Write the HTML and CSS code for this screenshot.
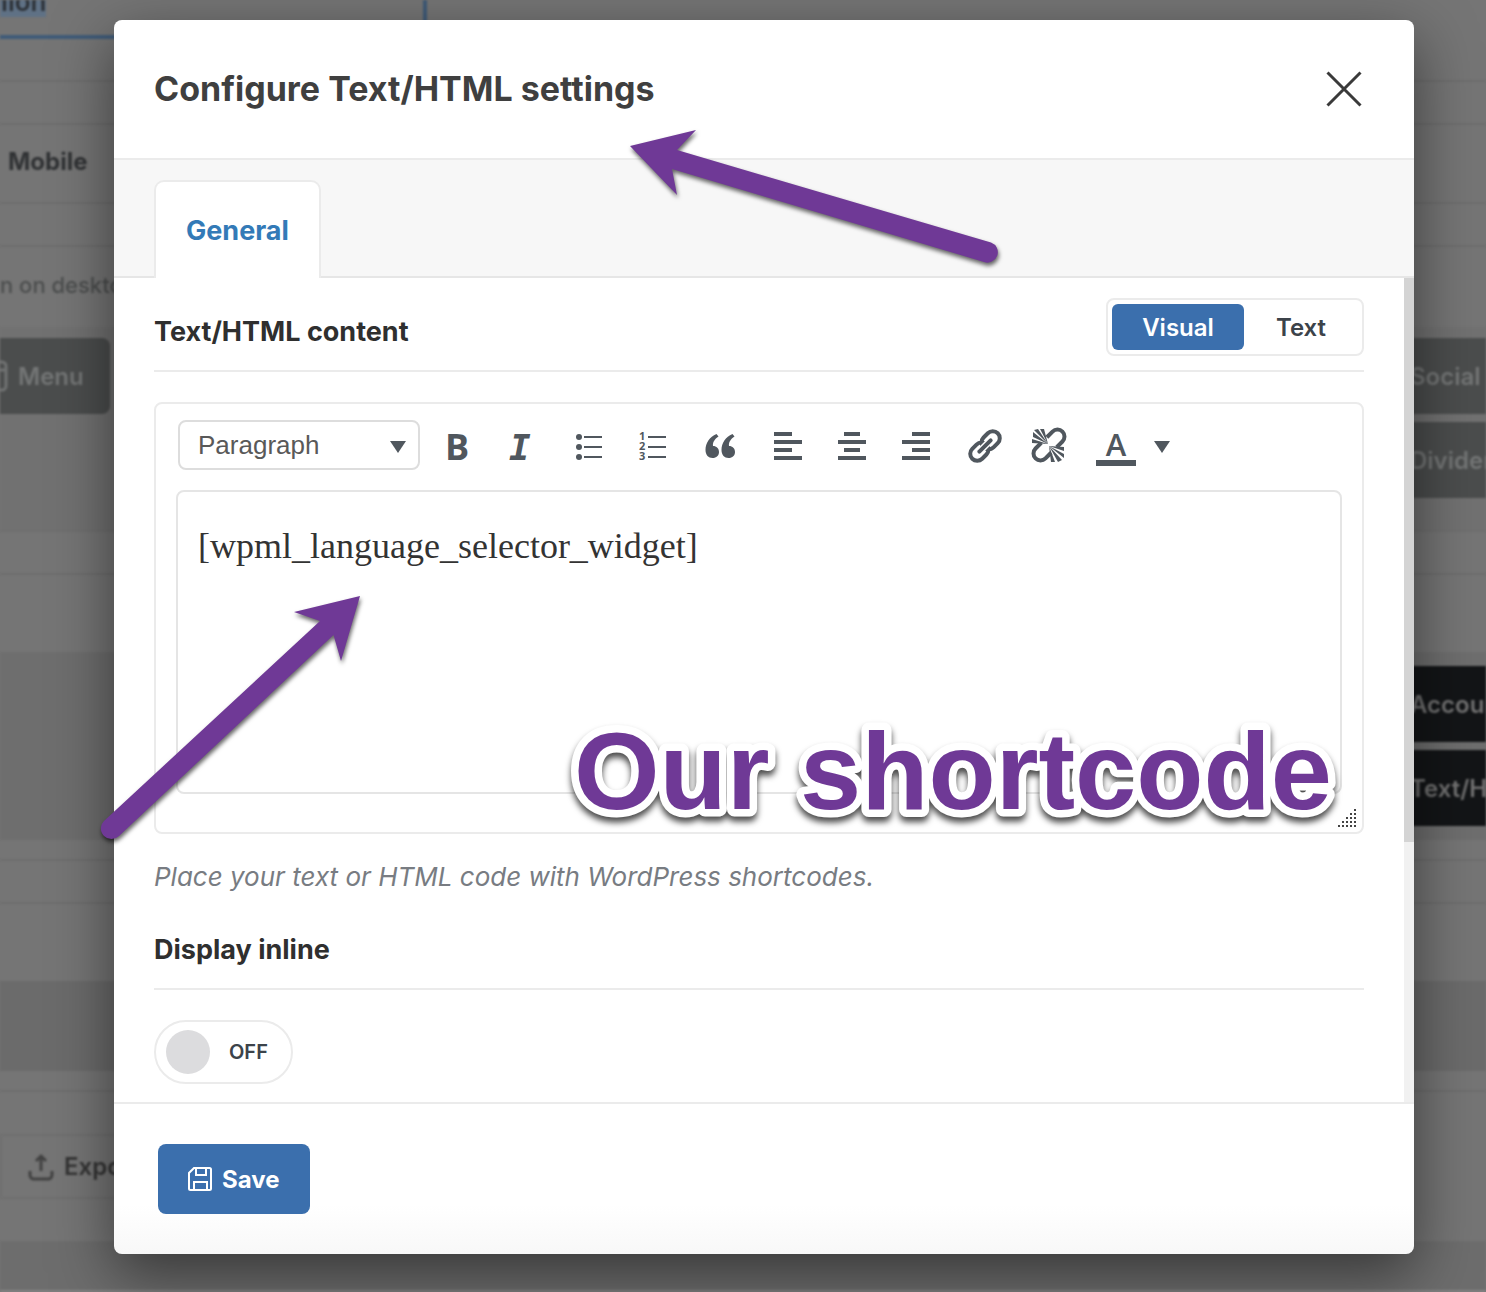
FILE: index.html
```html
<!DOCTYPE html>
<html lang="en">
  <head>
    <meta charset="UTF-8" />
    <meta name="viewport" content="width=device-width, initial-scale=1.0" />
    <title>Header builder</title>
    <link rel="stylesheet" href="styles.css">
  </head>
  <body>
    <!-- Builder page under the popup -->
    <div class="builder" aria-hidden="true">
      <div class="row row-title"><div class="title-box"><span>nion</span></div></div>
      <div class="row row-small"></div>
      <div class="row row-tabs"><span class="device">Mobile</span></div>
      <div class="row row-small"></div>
      <div class="row row-note"><span>n on desktop</span></div>
      <div class="row row-elements">
        <div class="element element-left">
          <svg width="10" height="34" viewBox="0 0 10 34"><path d="M-8 3H2a4 4 0 0 1 4 4v20a4 4 0 0 1-4 4H-8M-8 11H6" fill="none" stroke="#707272" stroke-width="3"/></svg>
          Menu
        </div>
        <div class="elements-right">
          <div class="element">Social</div>
          <div class="element">Divider</div>
        </div>
      </div>
      <div class="row row-small"></div>
      <div class="row row-space"></div>
      <div class="row row-main">
        <div class="elements-right">
          <div class="element element-dark">Account</div>
          <div class="element element-dark">Text/HTML</div>
        </div>
      </div>
      <div class="row row-thin"></div>
      <div class="row row-small"></div>
      <div class="row row-space"></div>
      <div class="row row-band"></div>
      <div class="row row-thin"></div>
      <div class="row row-export">
        <div class="export">
          <svg width="26" height="28" viewBox="0 0 26 28"><path d="M2 18v4a4 4 0 0 0 4 4h14a4 4 0 0 0 4-4v-4M13 18V3M8 8l5-5 5 5" fill="none" stroke="#424242" stroke-width="3"/></svg>
          Export
        </div>
      </div>
      <div class="row row-footer"></div>
    </div>

    <div class="overlay">
      <div class="popup" role="dialog" aria-labelledby="popupTitle">
        <div class="popup-header">
          <h2 id="popupTitle">Configure Text/HTML settings</h2>
          <button type="button" class="close" aria-label="Close">
            <svg width="36" height="36" viewBox="0 0 36 36"><path d="M1.500 1.500l33 33M34.500 1.500l-33 33" stroke="#3a3a3a" stroke-width="3"/></svg>
          </button>
        </div>

        <div class="tabs">
          <button type="button" class="tab">General</button>
        </div>

        <div class="popup-body">
          <div class="fields">
            <div class="field-title">
              <h3><label for="content">Text/HTML content</label></h3>
              <div class="switch-mode">
                <button type="button" class="mode active">Visual</button>
                <button type="button" class="mode">Text</button>
              </div>
            </div>

            <div class="editor">
              <div class="toolbar">
                <div class="format">
                  <select aria-label="Format">
                    <option>Paragraph</option>
                    <option>Heading 1</option>
                    <option>Heading 2</option>
                  </select>
                  <svg class="format-arrow" width="16" height="12" viewBox="0 0 16 12"><path d="M0 0h16L8 12z"/></svg>
                </div>
                <button type="button" class="tool" aria-label="Bold"><span class="tool-bold">B</span></button>
                <button type="button" class="tool" aria-label="Italic"><svg viewBox="0 0 40 40"><text class="italic" x="6" y="35">I</text></svg></button>
                <button type="button" class="tool" aria-label="Bulleted list">
                  <svg viewBox="0 0 40 40"><circle cx="10" cy="12" r="3"/><circle cx="10" cy="22" r="3"/><circle cx="10" cy="32" r="3"/><path d="M15 11h18v2H15zM15 21h18v2H15zM15 31h18v2H15z"/></svg>
                </button>
                <button type="button" class="tool" aria-label="Numbered list">
                  <svg viewBox="0 0 40 40"><text class="num" x="4" y="15">1</text><text class="num" x="4" y="25">2</text><text class="num" x="4" y="35">3</text><path d="M13 11h18v2H13zM13 21h18v2H13zM13 31h18v2H13z"/></svg>
                </button>
                <button type="button" class="tool" aria-label="Blockquote">
                  <svg viewBox="0 0 40 40"><path id="quote" d="M15.500 9C8.500 12 4.500 18 4.500 25c0 5 3 8 7 8 4 0 6.500-2.500 6.500-6 0-3.500-2.500-6-6-6-.5-3.500 1.500-7 5.500-9.500z"/><use href="#quote" x="16"/></svg>
                </button>
                <button type="button" class="tool" aria-label="Align left">
                  <svg viewBox="0 0 40 40"><path d="M7 7h18v4H7zM7 15h28v4H7zM7 23h18v4H7zM7 31h28v4H7z"/></svg>
                </button>
                <button type="button" class="tool" aria-label="Align center">
                  <svg viewBox="0 0 40 40"><path d="M11 7h16v4H11zM5 15h28v4H5zM11 23h16v4H11zM5 31h28v4H5z"/></svg>
                </button>
                <button type="button" class="tool" aria-label="Align right">
                  <svg viewBox="0 0 40 40"><path d="M13 7h18v4H13zM3 15h28v4H3zM13 23h18v4H13zM3 31h28v4H3z"/></svg>
                </button>
                <button type="button" class="tool" aria-label="Insert link">
                  <svg viewBox="0 0 40 40">
                    <g transform="translate(20 21) rotate(-45)" fill="none" stroke="#50575e" stroke-width="4">
                      <rect x="-18" y="-7" width="20" height="14" rx="7"/>
                      <rect x="-2" y="-7" width="20" height="14" rx="7"/>
                      <path d="M-9 0H9" stroke="#fff" stroke-width="7"/>
                      <path d="M-8 0H8" stroke-linecap="round"/>
                    </g>
                  </svg>
                </button>
                <button type="button" class="tool" aria-label="Remove link">
                  <svg viewBox="0 0 40 40">
                    <g transform="translate(18 20) rotate(-45)" fill="none" stroke="#50575e" stroke-width="4">
                      <path d="M-4-7h-8a7 7 0 0 0 0 14H-4M4-7h8a7 7 0 0 1 0 14H4"/>
                    </g>
                    <path d="M17 19L1 14v4zM17 19L2 7v5zM17 19L3 5l4-1zM17 19L9 4h4zM18 21l15 1v4zM18 21l15 8v4zM18 21l13 14-4 2zM18 21l6 16h-4z"/>
                  </svg>
                </button>
                <button type="button" class="tool" aria-label="Text color">
                  <svg viewBox="0 0 40 40"><text class="color" x="19" y="31" text-anchor="middle">A</text><path d="M-1 35h40v6H-1z"/></svg>
                </button>
                <button type="button" class="tool-arrow" aria-label="Choose color">
                  <svg width="16" height="12" viewBox="0 0 16 12"><path d="M0 0h16L8 12z"/></svg>
                </button>
              </div>
              <textarea id="content" spellcheck="false">[wpml_language_selector_widget]</textarea>
              <svg class="grip" width="20" height="20" viewBox="0 0 20 20">
                <g stroke="#444" stroke-width="2" stroke-dasharray="2 2">
                  <path d="M0 18h18M4 14h14M8 10h10M12 6h6M16 2h2"/>
                </g>
              </svg>
            </div>
            <p class="help">Place your text or HTML code with WordPress shortcodes.</p>

            <div class="field-title field-inline">
              <h3>Display inline</h3>
            </div>
            <label class="toggle"><input type="checkbox" />OFF</label>
          </div>
          <div class="scrollbar"><div class="thumb"></div></div>
        </div>

        <div class="popup-footer">
          <button type="button" class="save">
            <svg width="24" height="26" viewBox="0 0 24 26"><path d="M6 2H21.500a1.500 1.500 0 0 1 1.500 1.500v19a1.500 1.500 0 0 1-1.500 1.500H2.500A1.500 1.500 0 0 1 1 22.500V7zM8 2v7h10V2M6 24v-8h13v8" fill="none" stroke="#fff" stroke-width="2"/></svg>
            Save
          </button>
        </div>
      </div>
    </div>

    <!-- Notes drawn over the popup -->
    <svg class="arrow arrow-title" width="380" height="150" viewBox="0 0 380 150">
      <path d="M10 26L76 10 57 30 371 122.500A10.200 10.200 0 0 1 364 142L52 49 57 75z"/>
    </svg>
    <svg class="arrow arrow-code" width="280" height="270" viewBox="0 0 280 270">
      <path d="M270 16L251 81 243.500 55 29 256A10.200 10.200 0 0 1 14 241L230 41 204 32z"/>
    </svg>
    <svg class="note" width="800" height="140" viewBox="0 0 800 140">
      <text x="14" y="109">Our shortcode</text>
    </svg>
  </body>
</html>
```
FILE: styles.css
```css
* {
  box-sizing: border-box;
}

body {
  margin: 0;
  position: relative;
  min-height: 100vh;
  overflow: hidden;
  font-family: Inter, "Liberation Sans", sans-serif;
  background-color: #757575;
}

h2,
h3,
p {
  margin: 0;
}

button {
  font-family: inherit;
  border: none;
  background: none;
  padding: 0;
  cursor: pointer;
}

/* builder page */
.builder {
  position: absolute;
  inset: 0;
  overflow: hidden;
  filter: blur(1px);
  font-size: 24px;
  font-weight: 600;
}

.row {
  display: flex;
  justify-content: space-between;
  border-bottom: 2px solid #6e6e6e;
}

.row-title {
  height: 82px;
}

.title-box {
  width: 427px;
  height: 39px;
  border-right: 4px solid #3f5b78;
  border-bottom: 4px solid #3f5b78;
  font-size: 26px;
  color: #2d3238;
  line-height: 4px;
}

.title-box span {
  background: #5f7185;
  margin-left: -8px;
}

.row-small {
  height: 43px;
}

.row-tabs {
  height: 79px;
  padding: 0 0 4px 8px;
  align-items: center;
  font-weight: 700;
  color: #303234;
}

.row-note {
  height: 80px;
  padding-bottom: 4px;
  align-items: center;
  border: none;
  font-size: 22px;
  font-weight: 500;
  color: #4c4e4e;
}

.row-elements {
  height: 205px;
  padding-top: 11px;
  background: #717171;
}

.element {
  height: 76px;
  display: flex;
  align-items: center;
  gap: 8px;
  background: #4b4d4d;
  color: #747676;
}

.element-left {
  width: 110px;
  border-radius: 0 8px 8px 0;
}

.elements-right {
  width: 76px;
  margin-left: auto;
  display: flex;
  flex-direction: column;
  gap: 8px;
}

.element-dark {
  background: #131517;
  color: #727272;
}

.row-space {
  height: 77px;
  border: none;
}

.row-main {
  height: 188px;
  padding-top: 14px;
  border: none;
  background: #6e6e6e;
}

.row-thin {
  height: 21px;
}

.row-band {
  height: 90px;
  border: none;
  background: #6b6b6b;
}

.row-export {
  height: 151px;
  padding: 42px 0;
}

.export {
  display: flex;
  align-items: center;
  gap: 10px;
  padding: 0 26px;
  border: 2px solid #707070;
  color: #333;
}

.row-footer {
  height: 49px;
  border-bottom: 2px solid #858585;
  background: #6d6d6d;
}

/* popup */
.overlay {
  position: relative;
  padding: 20px 72px 38px 114px;
}

.popup {
  background: linear-gradient(#fff 96%, #f8f8f8);
  border-radius: 8px;
  box-shadow: 0 20px 60px rgba(0, 0, 0, 0.5);
}

.popup-header {
  display: flex;
  justify-content: space-between;
  align-items: center;
  height: 140px;
  padding: 0 52px 0 40px;
  border-bottom: 2px solid #ebebeb;
}

.popup-header h2 {
  font-size: 34px;
  line-height: 48px;
  font-weight: 700;
  color: #3f3f3f;
}

.close {
  height: 36px;
}

.tabs {
  display: flex;
  height: 118px;
  padding: 20px 40px 0;
  background: #f7f7f7;
  box-shadow: inset 0 -2px #e6e6e6;
}

.tab {
  padding: 0 30px;
  border: 2px solid #ebebeb;
  border-bottom: none;
  border-radius: 10px 10px 0 0;
  background: #fff;
  font-size: 27px;
  font-weight: 700;
  color: #337ab7;
}

.popup-body {
  display: flex;
  border-bottom: 2px solid #ebebeb;
}

.fields {
  flex: 1;
  padding: 20px 40px 18px;
}

.field-title {
  display: flex;
  justify-content: space-between;
  align-items: flex-start;
  height: 74px;
  border-bottom: 2px solid #ebebeb;
}

h3 {
  font-size: 27px;
  line-height: 68px;
  font-weight: 700;
  color: #2f2f2f;
}

.switch-mode {
  display: flex;
  padding: 4px;
  border: 2px solid #ebebeb;
  border-radius: 8px;
}

.mode {
  width: 132px;
  height: 46px;
  border-radius: 6px;
  font-size: 24px;
  font-weight: 600;
  color: #3c434a;
}

.mode + .mode {
  width: 114px;
}

.mode.active {
  background: #3b6fad;
  color: #fff;
}

.editor {
  position: relative;
  margin-top: 30px;
  padding: 16px 20px 38px;
  border: 2px solid #ebebeb;
  border-radius: 8px;
}

.toolbar {
  display: flex;
  align-items: center;
  margin-bottom: 20px;
  padding-left: 2px;
}

.toolbar svg {
  display: block;
  overflow: visible;
  fill: #50575e;
}

.format {
  position: relative;
  width: 242px;
  margin-right: 4px;
}

.format select {
  appearance: none;
  display: block;
  width: 100%;
  height: 50px;
  padding: 0 18px;
  border: 2px solid #ddd;
  border-radius: 8px;
  background: #fff;
  font-family: "Liberation Sans", Arial, sans-serif;
  font-size: 26px;
  color: #595959;
}

.format-arrow {
  position: absolute;
  right: 14px;
  top: 21px;
  pointer-events: none;
}

.tool {
  display: flex;
  justify-content: center;
  align-items: center;
  width: 66px;
  height: 40px;
}

.tool svg {
  width: 40px;
  height: 40px;
}

.tool-bold {
  padding-top: 4px;
  font: bold 36px/40px "Open Sans", sans-serif;
  color: #50575e;
}

.italic {
  font: italic bold 36px "DejaVu Sans Mono", monospace;
}

.num {
  font: bold 11px/10px "Open Sans", sans-serif;
}

.color {
  font: 600 31px "Open Sans", sans-serif;
}

.tool-arrow {
  padding: 4px 4px 0;
}

textarea {
  display: block;
  width: 100%;
  height: 304px;
  padding: 32px 20px;
  border: 2px solid #e5e5e5;
  border-radius: 8px;
  resize: none;
  outline: none;
  font-family: Georgia, "Liberation Serif", serif;
  font-size: 36px;
  line-height: 44px;
  color: #333;
}

.grip {
  position: absolute;
  right: 4px;
  bottom: 4px;
}

.help {
  margin-top: 24px;
  font-size: 26px;
  line-height: 38px;
  font-style: italic;
  color: #787c82;
}

.field-inline {
  margin-top: 20px;
}

.toggle {
  display: flex;
  align-items: center;
  width: 139px;
  height: 64px;
  margin-top: 30px;
  padding-left: 10px;
  gap: 19px;
  border: 2px solid #ebebeb;
  border-radius: 32px;
  font-size: 20px;
  font-weight: 600;
  color: #3c434a;
}

.toggle input {
  appearance: none;
  width: 44px;
  height: 44px;
  margin: 0;
  border-radius: 50%;
  background: #dcdcde;
}

.scrollbar {
  width: 10px;
  background: #f1f1f1;
}

.thumb {
  height: 68.5%;
  background: #d4d4d4;
}

.popup-footer {
  padding: 40px 44px;
}

.save {
  display: flex;
  align-items: center;
  gap: 10px;
  height: 70px;
  padding: 0 30px;
  border-radius: 8px;
  background: #3b6fad;
  font-size: 24px;
  font-weight: 700;
  color: #fff;
}

/* notes */
.arrow {
  position: absolute;
  fill: #6f3996;
  filter: drop-shadow(1px 3px 2px rgba(0, 0, 0, 0.6));
}

.arrow-title {
  left: 620px;
  top: 120px;
}

.arrow-code {
  left: 90px;
  top: 580px;
}

.note {
  position: absolute;
  left: 560px;
  top: 700px;
  font: bold 110px "Liberation Sans", Arial, sans-serif;
  fill: #6f3996;
  stroke: #fff;
  stroke-width: 15px;
  stroke-linejoin: round;
  paint-order: stroke;
  filter: drop-shadow(0 5px 3px rgba(0, 0, 0, 0.7));
}
```
